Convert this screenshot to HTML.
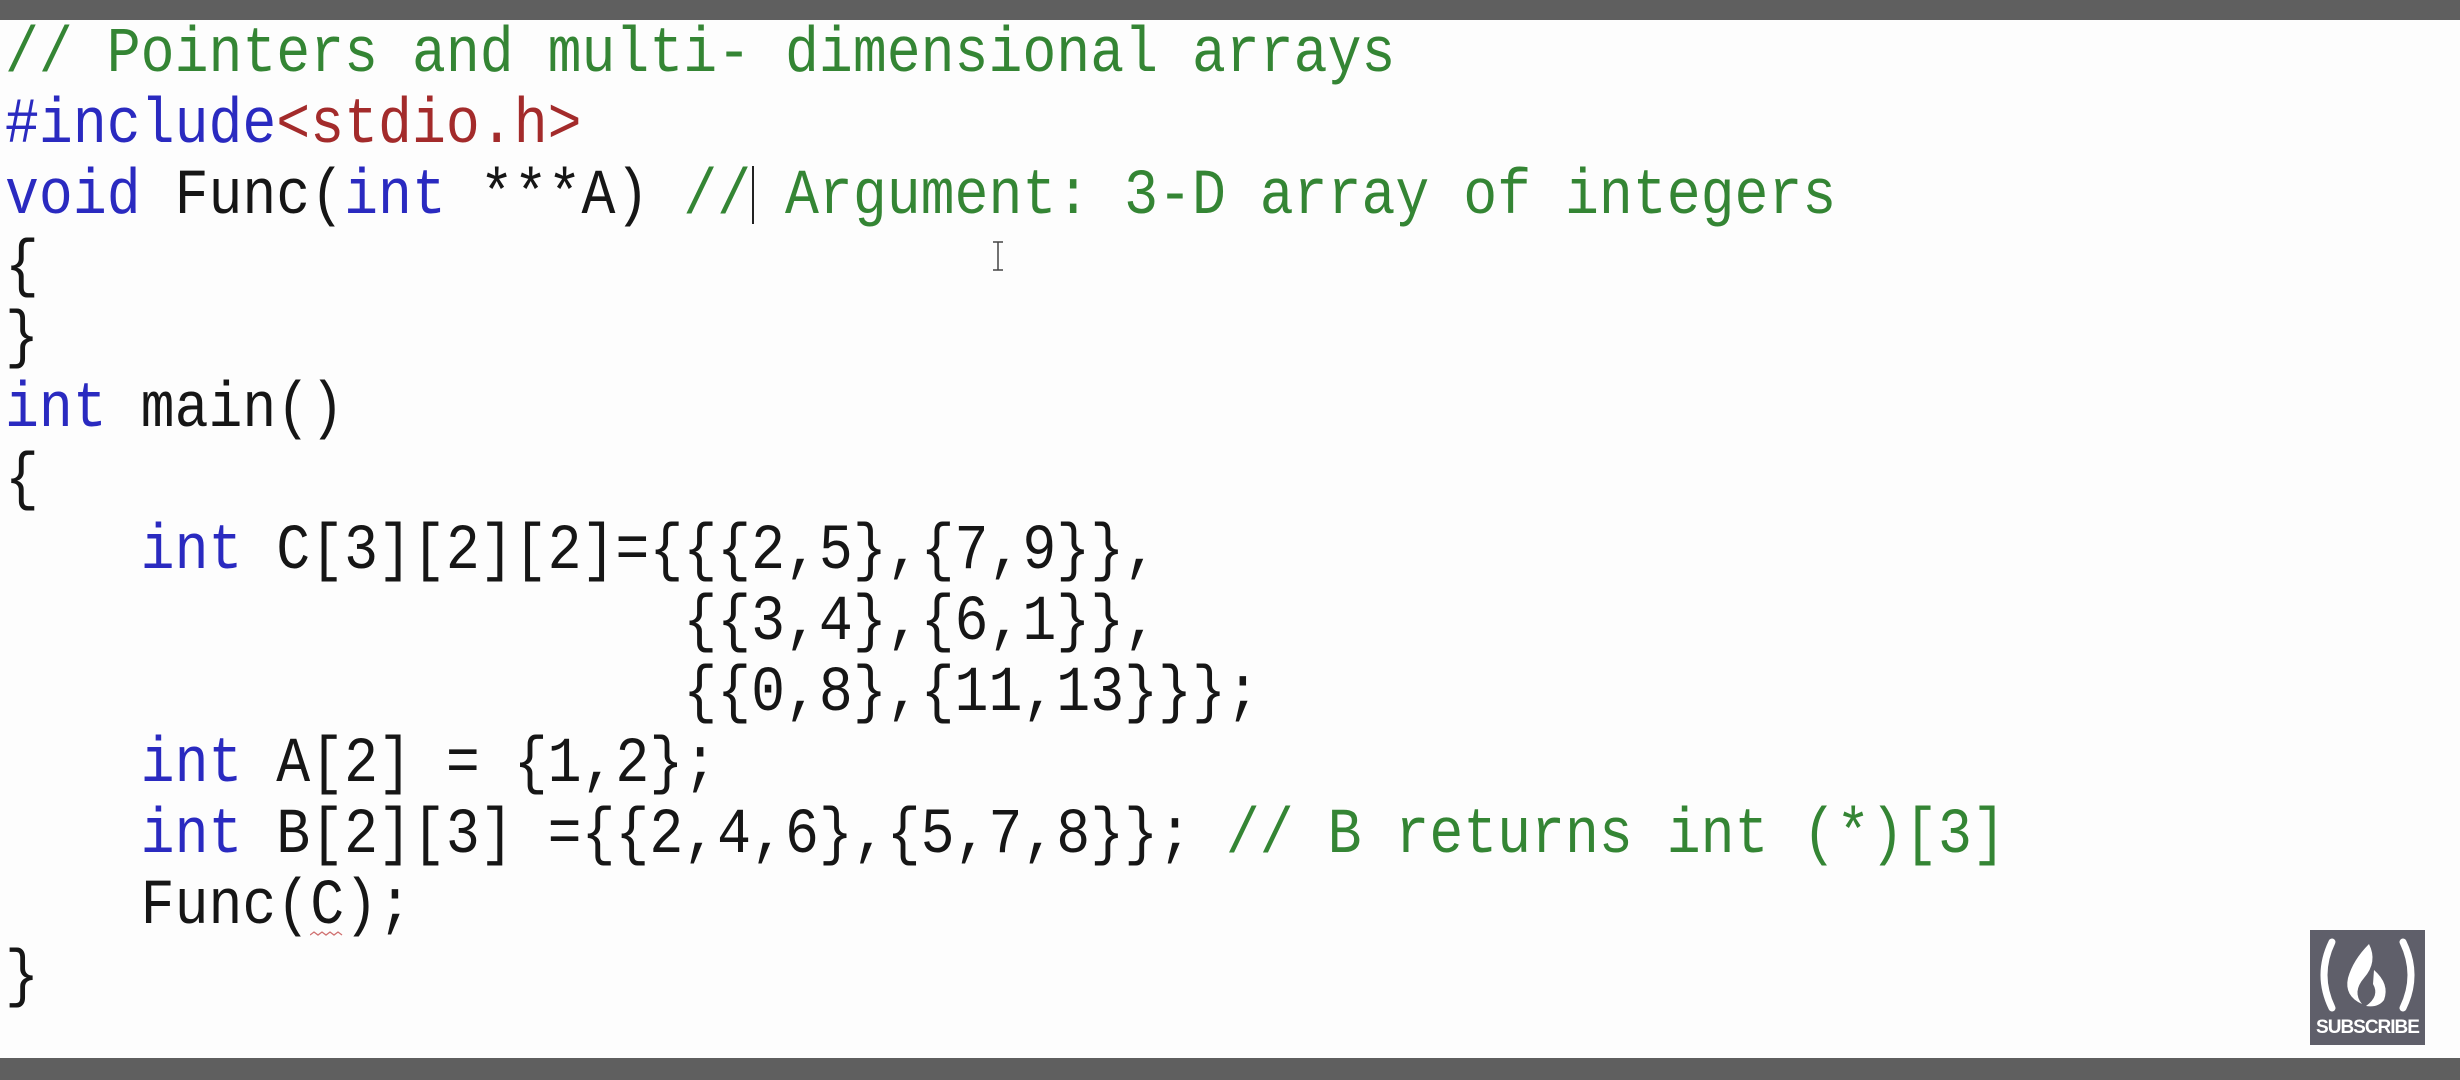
<!DOCTYPE html>
<html><head><meta charset="utf-8"><style>
html,body{margin:0;padding:0;}
body{width:2460px;height:1080px;background:#fdfdfd;position:relative;overflow:hidden;}
.top{position:absolute;left:0;top:0;width:2460px;height:20px;background:#5f5f5f;}
.bot{position:absolute;left:0;top:1058px;width:2460px;height:22px;background:#5f5f5f;}
.code{position:absolute;left:5px;top:20px;font-family:"Liberation Mono",monospace;font-size:64px;line-height:71px;white-space:pre;color:#161616;transform:scaleX(0.883);transform-origin:0 0;}
.c{color:#348534}.k{color:#2a2ac0}.s{color:#a32b2b}
.cur{position:absolute;left:752px;top:166px;width:2px;height:58px;background:#222;}
.sq{position:absolute;left:310px;top:930px;}
.sub{position:absolute;left:2310px;top:930px;width:115px;height:115px;background:#5f5f6a;}
.sub span{position:absolute;left:0;width:115px;bottom:6px;text-align:center;color:#fff;font-family:"Liberation Sans",sans-serif;font-weight:bold;font-size:19px;letter-spacing:-1px;}
</style></head><body>
<div class="top"></div>
<div class="code"><span class="c">// Pointers and multi- dimensional arrays</span>
<span class="k">#include</span><span class="s">&lt;stdio.h&gt;</span>
<span class="k">void</span> Func(<span class="k">int</span> ***A) <span class="c">// Argument: 3-D array of integers</span>
{
}
<span class="k">int</span> main()
{
    <span class="k">int</span> C[3][2][2]={{{2,5},{7,9}},
                    {{3,4},{6,1}},
                    {{0,8},{11,13}}};
    <span class="k">int</span> A[2] = {1,2};
    <span class="k">int</span> B[2][3] ={{2,4,6},{5,7,8}}; <span class="c">// B returns int (*)[3]</span>
    Func(C);
}</div>
<div class="cur"></div>
<svg style="position:absolute;left:990px;top:240px" width="16" height="32"><path d="M3 2h10M8 2v28M3 30h10" stroke="#444" stroke-width="1.5" fill="none"/></svg>
<svg class="sq" width="36" height="8"><path d="M0 5l4-3 4 3 4-3 4 3 4-3 4 3 4-3 4 3" stroke="#d07070" stroke-width="1.3" fill="none"/></svg>
<div class="sub">
<svg width="115" height="90" style="position:absolute;left:0;top:0">
<path d="M22 12 Q6 45 22 78" stroke="#fff" stroke-width="7" fill="none" stroke-linecap="round"/>
<path d="M93 12 Q109 45 93 78" stroke="#fff" stroke-width="7" fill="none" stroke-linecap="round"/>
<path d="M59 14 Q68 32 54 48 Q42 62 52 74 Q34 66 38 48 Q43 30 59 14Z M64 40 Q80 54 74 70 Q68 78 56 76 Q70 66 63 54Z" fill="#fff"/>
</svg>
<span>SUBSCRIBE</span></div>
<div class="bot"></div>
</body></html>
